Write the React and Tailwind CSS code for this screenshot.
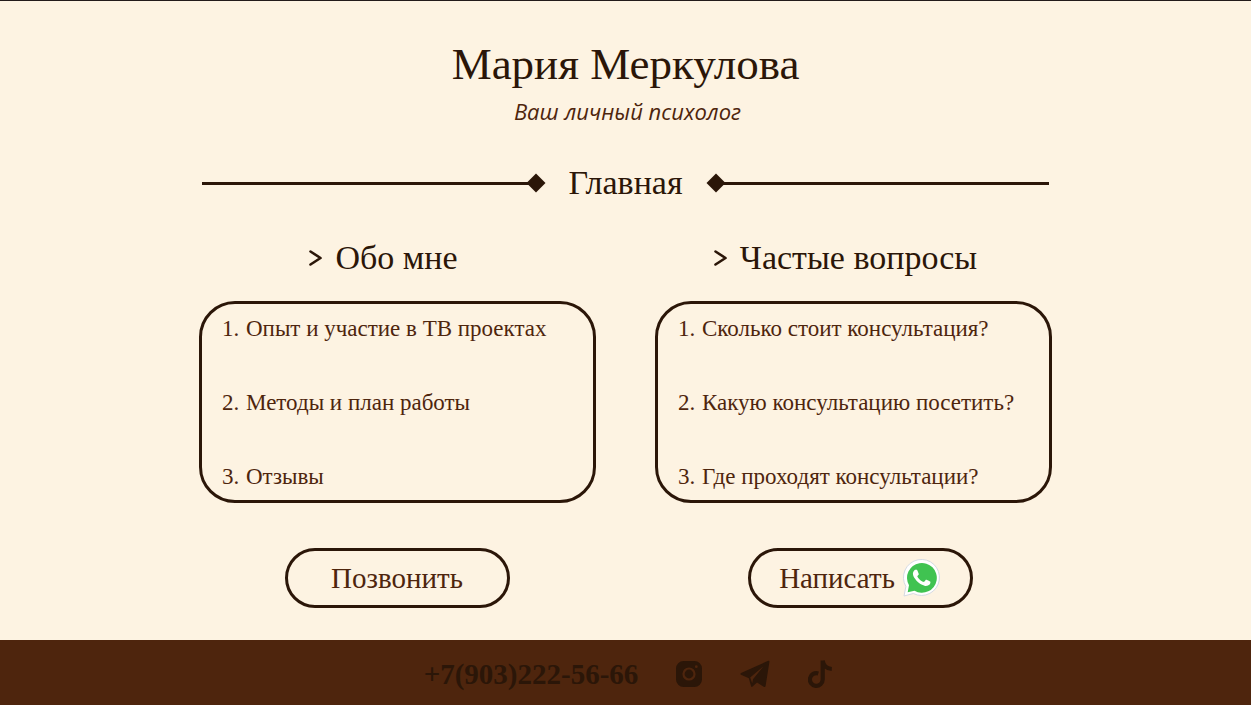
const sections = [
  {
    title: "Обо мне",
    headingClass: "pr-7",
    items: ["Опыт и участие в ТВ проектах", "Методы и план работы", "Отзывы"],
  },
  {
    title: "Частые вопросы",
    headingClass: "pr-4",
    items: [
      "Сколько стоит консультация?",
      "Какую консультацию посетить?",
      "Где проходят консультации?",
    ],
  },
];

function Chevron() {
  return (
    <svg viewBox="0 0 14 18" className="h-[18px] w-[14px] shrink-0" fill="none" aria-hidden="true">
      <path d="M1.500 2.500L11.500 9L1.500 15.500" stroke="currentColor" strokeWidth="2.6" strokeLinejoin="round" strokeLinecap="round" />
    </svg>
  );
}

function Diamond() {
  return (
    <svg viewBox="0 0 20 20" className="size-5 shrink-0" aria-hidden="true">
      <path d="M10 0.5L19.5 10L10 19.5L0.5 10Z" fill="currentColor" />
    </svg>
  );
}

function WhatsAppIcon() {
  return (
    <svg viewBox="0 0 38 38" className="size-[38px] shrink-0" aria-hidden="true">
      <path
        d="M1 37L2.900 27.500A18 18 0 1 1 10.300 34.500Z"
        fill="#fff"
        stroke="#d5dae2"
        strokeWidth="1"
        strokeLinejoin="round"
      />
      <path d="M4.700 33.300L6 26.300A14.900 14.900 0 1 1 11.500 31.800Z" fill="#40c351" />
      <path
        transform="translate(1.2 1.4) scale(1.45)"
        fill="#fff"
        d="M17.472 14.382c-.297-.149-1.758-.867-2.03-.967-.273-.099-.471-.148-.67.15-.197.297-.767.966-.94 1.164-.173.199-.347.223-.644.075-.297-.15-1.255-.463-2.39-1.475-.883-.788-1.48-1.761-1.653-2.059-.173-.297-.018-.458.13-.606.134-.133.298-.347.446-.52.149-.174.198-.298.298-.497.099-.198.05-.371-.025-.52-.075-.149-.669-1.612-.916-2.207-.242-.579-.487-.5-.669-.51-.173-.008-.371-.01-.57-.01-.198 0-.52.074-.792.372-.272.297-1.04 1.016-1.04 2.479 0 1.462 1.065 2.875 1.213 3.074.149.198 2.096 3.2 5.077 4.487.709.306 1.262.489 1.694.625.712.227 1.36.195 1.871.118.571-.085 1.758-.719 2.006-1.413.248-.694.248-1.289.173-1.413-.074-.124-.272-.198-.57-.347"
      />
    </svg>
  );
}

function InstagramIcon() {
  return (
    <svg viewBox="0 0 26 26" className="size-[26px]" aria-hidden="true">
      <path
        fill="currentColor"
        fillRule="evenodd"
        d="M7.500 0H18.500A7.500 7.500 0 0 1 26 7.500V18.500A7.500 7.500 0 0 1 18.500 26H7.500A7.500 7.500 0 0 1 0 18.500V7.500A7.500 7.500 0 0 1 7.500 0ZM13 6.400A6.600 6.600 0 1 0 13 19.600A6.600 6.600 0 1 0 13 6.400ZM13 8.600A4.400 4.400 0 1 1 13 17.400A4.400 4.400 0 1 1 13 8.600ZM20.300 4.300A1.400 1.400 0 1 0 20.300 7.100A1.400 1.400 0 1 0 20.300 4.300Z"
      />
    </svg>
  );
}

function TelegramIcon() {
  return (
    <svg viewBox="0 0 30 28" className="h-7 w-[30px]" aria-hidden="true">
      <path
        fill="currentColor"
        d="M28.200 0.800Q29.600 0.400 29.400 1.900L25.600 26Q25.200 27.600 23.700 26.700L17 22.500L12.600 26.600Q11.400 27.500 11 26L8.800 18.200L1 14.800Q-0.200 14 1 13.100ZM23.500 6.200L10.200 17.400L12.200 23.200L13 19.200Z"
        fillRule="evenodd"
      />
    </svg>
  );
}

function TikTokIcon() {
  return (
    <svg viewBox="0 0 25 28" className="h-7 w-[25px]" fill="none" aria-hidden="true">
      <path
        d="M10.300 13.400A6.400 6.400 0 1 0 14.700 19.500V0.500M14.700 0.500C15.200 5.400 18.600 8.700 23.800 9"
        stroke="currentColor"
        strokeWidth="4.2"
      />
    </svg>
  );
}

const pill =
  "flex h-[60px] w-[225px] items-center justify-center gap-2 rounded-full border-3 border-[#2b1608] text-[29px] leading-8";

export default function App() {
  return (
    <div className="flex min-h-screen flex-col border-t border-[#231a1a] bg-[#fdf3e2] font-['Liberation_Serif',serif] text-[#2b1608]">
      <main className="mx-auto w-full max-w-[853px] flex-1">
        <header className="pt-9 text-center">
          <h1 className="text-[45px] leading-[54px]">Мария Меркулова</h1>
          <p className="pl-1 font-['Open_Sans',sans-serif] text-[22px] leading-10 text-[#4e250d] italic">
            Ваш личный психолог
          </p>
        </header>

        <div className="mt-8 flex items-center px-[3px]">
          <div className="h-[3px] flex-1 bg-current" />
          <div className="-ml-2">
            <Diamond />
          </div>
          <h2 className="w-[160px] text-center text-[34px] leading-10">Главная</h2>
          <div className="-mr-2">
            <Diamond />
          </div>
          <div className="h-[3px] flex-1 bg-current" />
        </div>

        <div className="mt-[33px] grid grid-cols-2 gap-x-[59px]">
          {sections.map((section) => (
            <section key={section.title}>
              <h3 className={`flex items-center justify-center gap-3 text-[34px] leading-[44px] ${section.headingClass}`}>
                <Chevron />
                {section.title}
              </h3>
              <ol className="mt-[21px] flex flex-col gap-[46px] rounded-[36px] border-3 border-[#2b1608] px-5 pt-[11px] pb-[9px] text-[23px] leading-7 text-[#4e250d]">
                {section.items.map((item, i) => (
                  <li key={item} className="flex gap-2">
                    <span className="w-4">{i + 1}.</span>
                    <a href="#">{item}</a>
                  </li>
                ))}
              </ol>
            </section>
          ))}
        </div>

        <div className="mt-[45px] mb-8 flex justify-center gap-[238px] pl-[6px] text-[#4e250d]">
          <button type="button" className={pill}>
            Позвонить
          </button>
          <button type="button" className={pill}>
            Написать
            <WhatsAppIcon />
          </button>
        </div>
      </main>

      <footer className="flex h-[65px] items-center justify-center gap-[38px] bg-[#4e250d] pt-[2px] pl-[6px] text-[#2b1608]">
        <a href="tel:+79032225666" className="text-[29px] leading-8 font-bold">
          +7(903)222-56-66
        </a>
        <a href="#instagram" aria-label="Instagram">
          <InstagramIcon />
        </a>
        <a href="#telegram" aria-label="Telegram">
          <TelegramIcon />
        </a>
        <a href="#tiktok" aria-label="TikTok">
          <TikTokIcon />
        </a>
      </footer>
    </div>
  );
}
